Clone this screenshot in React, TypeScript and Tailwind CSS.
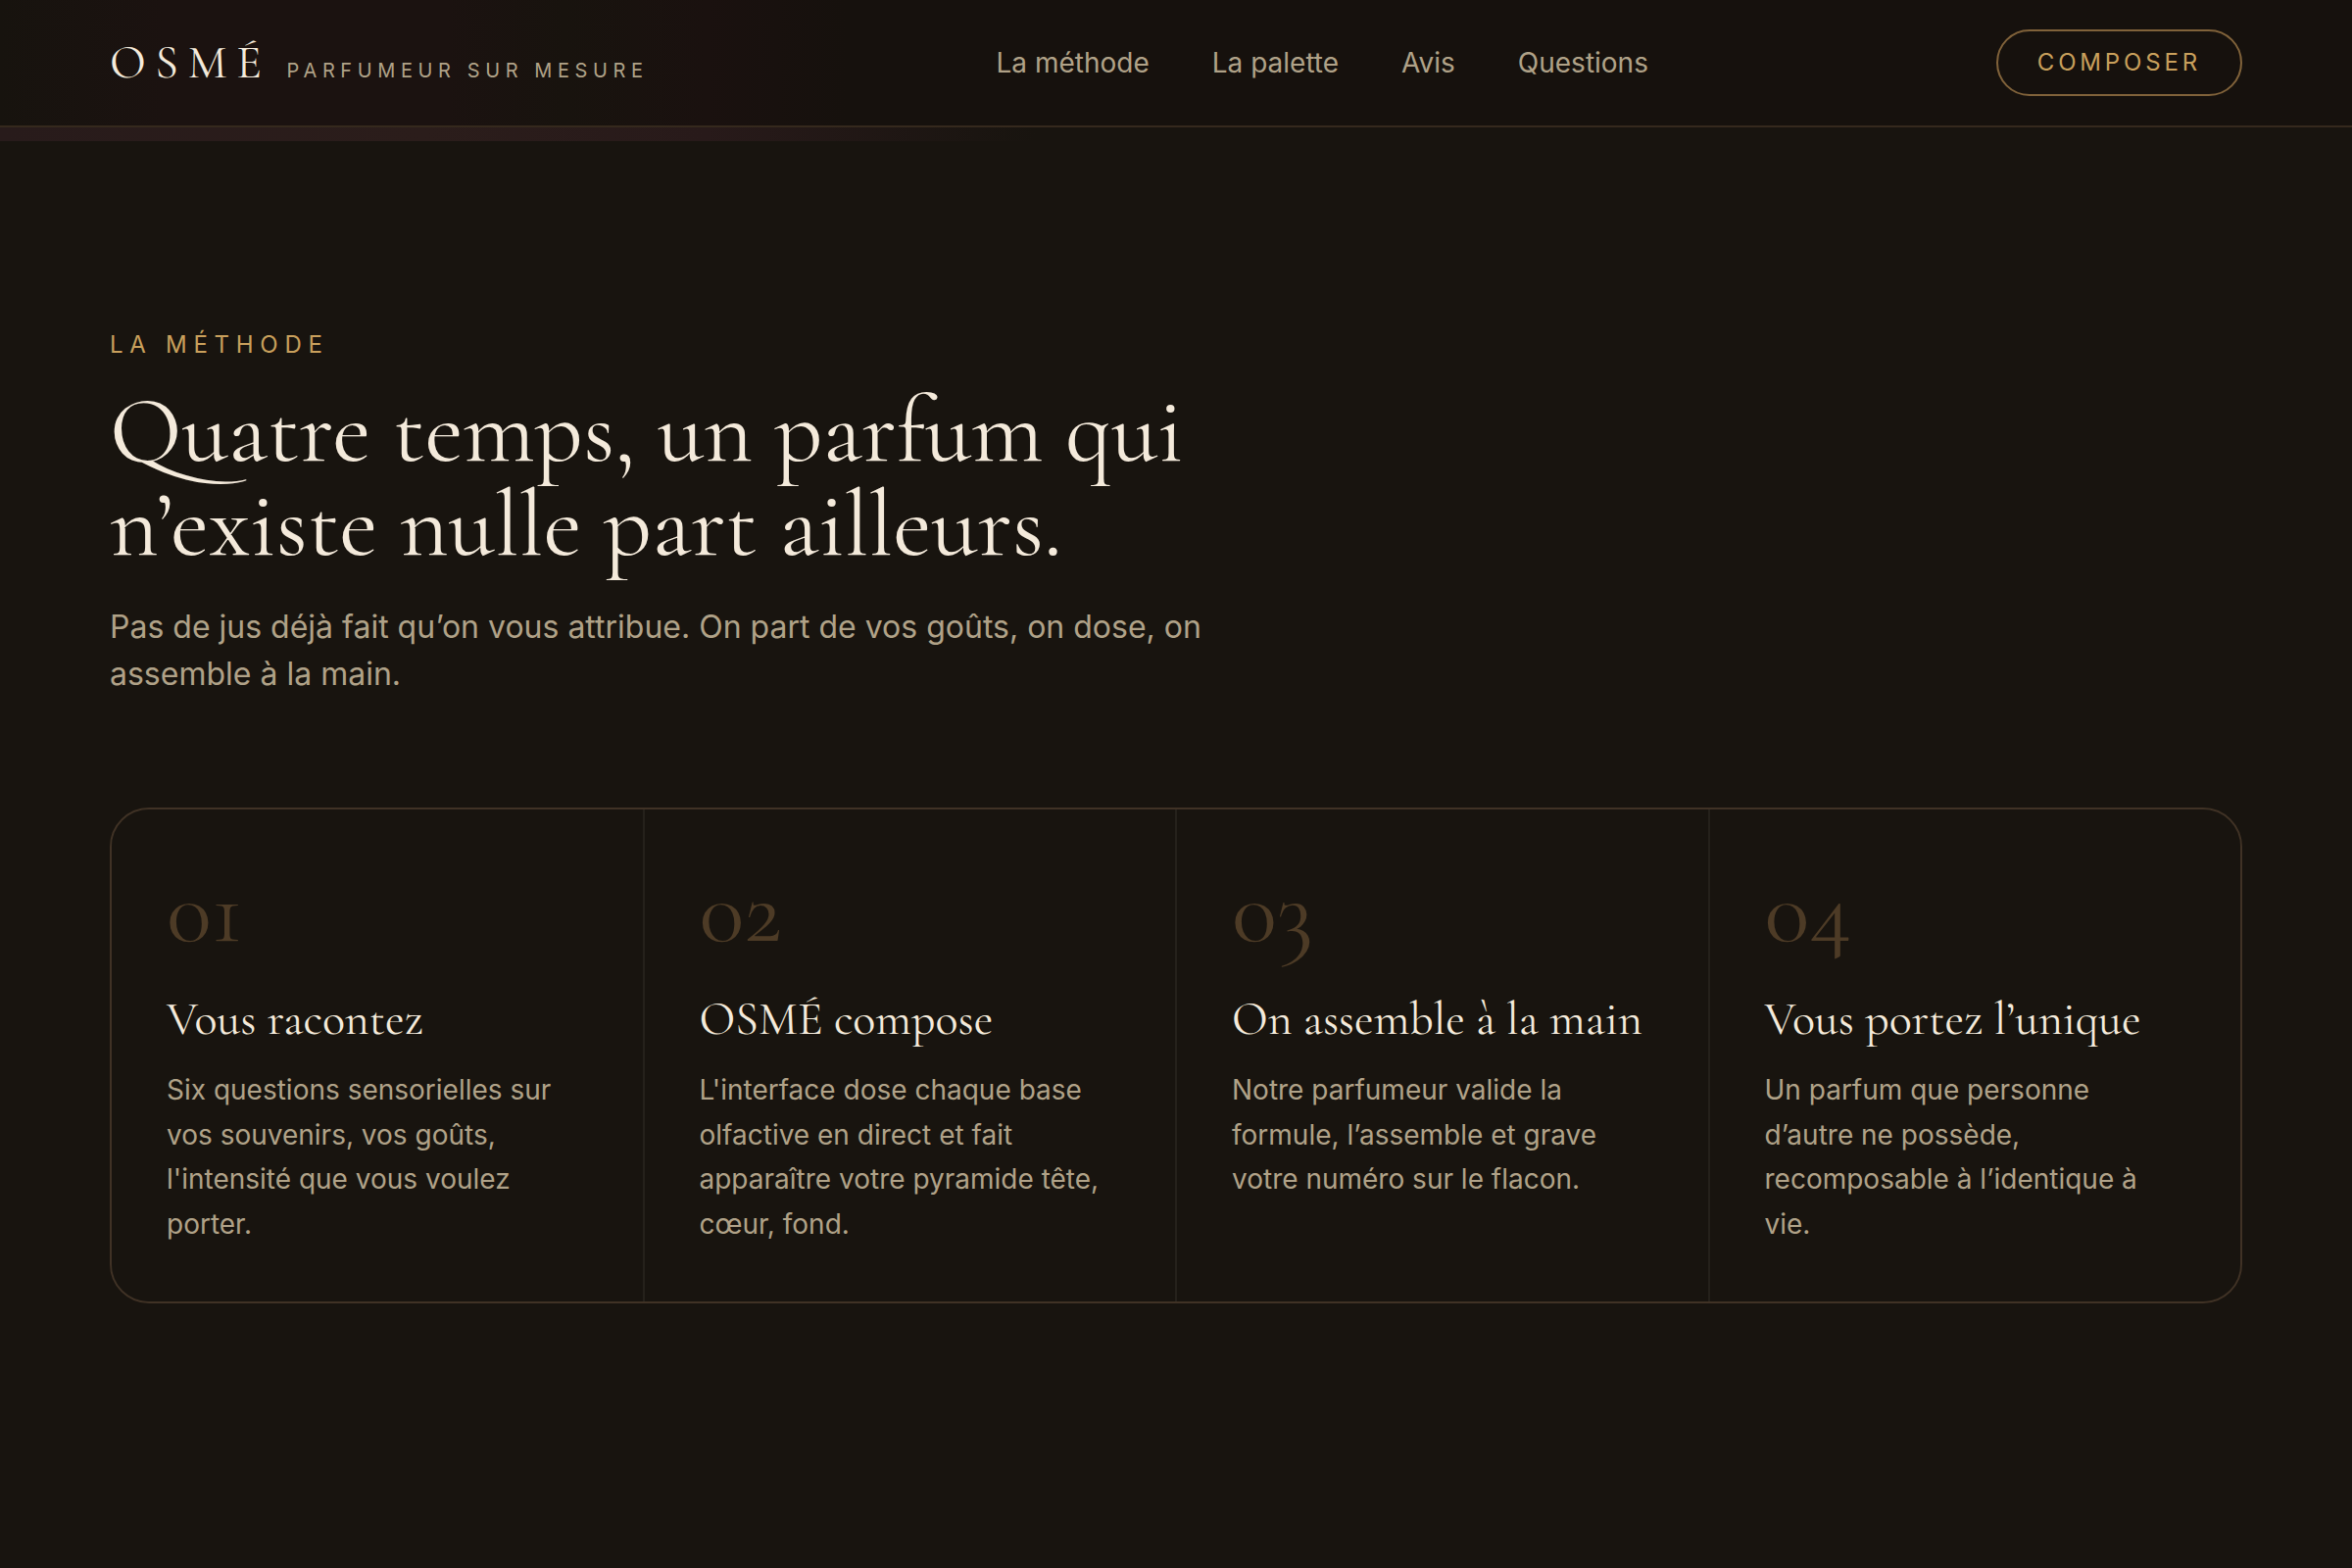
import React from 'react';

const navItems = [
  { label: 'La méthode', href: '#methode' },
  { label: 'La palette', href: '#palette' },
  { label: 'Avis', href: '#avis' },
  { label: 'Questions', href: '#questions' },
];

const steps = [
  {
    num: '01',
    title: 'Vous racontez',
    text: "Six questions sensorielles sur vos souvenirs, vos goûts, l'intensité que vous voulez porter.",
  },
  {
    num: '02',
    title: 'OSMÉ compose',
    text: "L'interface dose chaque base olfactive en direct et fait apparaître votre pyramide tête, cœur, fond.",
  },
  {
    num: '03',
    title: 'On assemble à la main',
    text: 'Notre parfumeur valide la formule, l’assemble et grave votre numéro sur le flacon.',
  },
  {
    num: '04',
    title: 'Vous portez l’unique',
    text: 'Un parfum que personne d’autre ne possède, recomposable à l’identique à vie.',
  },
];

const Header: React.FC = () => (
  <header className="flex items-center justify-between h-[130px] px-28 border-b-2 border-[#35291d] bg-[#16110d] bg-[linear-gradient(to_right,#17130e_0%,#1b1210_7%,#1b1210_19%,#18130e_24%,#1a110f_30%,#16110d_36%)]">
    <a href="#accueil" className="flex items-baseline gap-4">
      <span className="font-['Cormorant_Garamond','Liberation_Serif',serif] text-[48px] leading-[60px] tracking-[0.2em] text-[#f4eadb]">
        OSMÉ
      </span>
      <span className="text-[20px] leading-7 tracking-[0.28em] text-[#b0a288]">PARFUMEUR SUR MESURE</span>
    </a>

    <nav className="flex items-center gap-16">
      {navItems.map((item) => (
        <a key={item.label} href={item.href} className="text-[28px] leading-10 text-[#b0a288] hover:text-[#f4eadb]">
          {item.label}
        </a>
      ))}
    </nav>

    <button
      type="button"
      className="h-[68px] px-10 rounded-full border-2 border-[#80623a] text-[24px] leading-8 tracking-[0.16em] text-[#c9a05c]"
    >
      COMPOSER
    </button>
  </header>
);

const Method: React.FC = () => (
  <section id="methode" className="px-28 pt-[188px] pb-48">
    <div className="max-w-[1200px]">
      <p className="text-[24px] leading-10 tracking-[0.28em] text-[#c9a05c]">LA MÉTHODE</p>
      <h2 className="mt-5 font-['Cormorant_Garamond','Liberation_Serif',serif] text-[96px] leading-[96px] text-[#f4eadb]">
        Quatre temps, un parfum qui n’existe nulle part ailleurs.
      </h2>
      <p className="mt-8 max-w-[1160px] text-[32px] leading-[48px] text-[#b0a288]">
        Pas de jus déjà fait qu’on vous attribue. On part de vos goûts, on dose, on assemble à la main.
      </p>
    </div>

    {/* The 2px gaps let the list background show as dividers */}
    <ol className="mt-28 grid grid-cols-4 gap-0.5 rounded-[40px] border-2 border-[#403225] bg-[#25211b] overflow-hidden">
      {steps.map((step) => (
        <li key={step.num} className="p-14 bg-[#18140f]">
          <div className="font-['Cormorant_Garamond','Liberation_Serif',serif] text-[96px] leading-[96px] text-[#4d3b26]">
            {step.num}
          </div>
          <h3 className="mt-8 font-['Cormorant_Garamond','Liberation_Serif',serif] text-[48px] leading-[60px] text-[#f4eadb] whitespace-nowrap">
            {step.title}
          </h3>
          <p className="mt-5 text-[28px] leading-relaxed text-[#b0a288]">{step.text}</p>
        </li>
      ))}
    </ol>
  </section>
);

const App: React.FC = () => {
  return (
    <div className="min-h-screen bg-[#18140f] font-['Inter',sans-serif]">
      <Header />
      <div className="h-[14px] bg-[linear-gradient(to_right,#281b1b_0%,#2b1d1b_18%,#281a1a_30%,#18140f_44%)]" />
      <main>
        <Method />
      </main>
    </div>
  );
};

export default App;
